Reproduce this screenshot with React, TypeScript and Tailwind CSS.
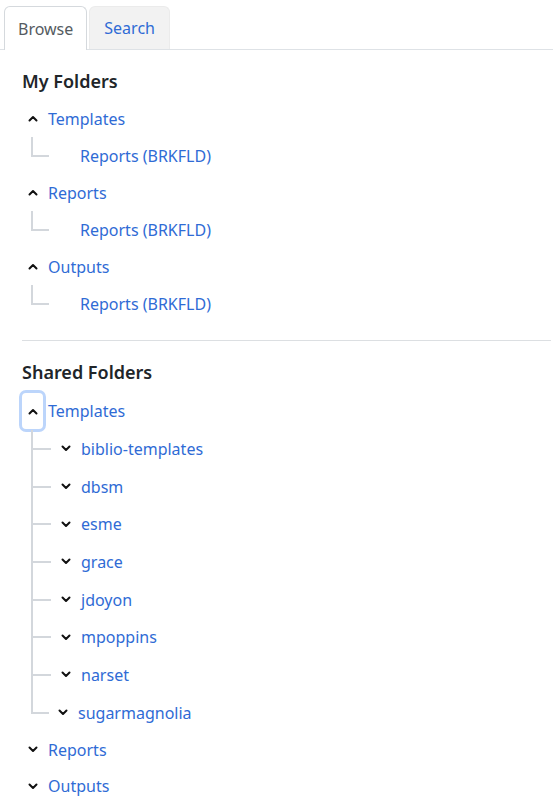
import React from 'react';

const Chevron: React.FC<{ up?: boolean }> = ({ up }) => (
  <svg width="10" height="7" viewBox="0 0 10 7" className="block">
    {up ? (
      <polyline points="1.5,5.5 5,2 8.5,5.5" fill="none" stroke="#111" strokeWidth="2" strokeLinecap="round" strokeLinejoin="round" />
    ) : (
      <polyline points="1.5,1.5 5,5 8.5,1.5" fill="none" stroke="#111" strokeWidth="2" strokeLinecap="round" strokeLinejoin="round" />
    )}
  </svg>
);

const Connector: React.FC<{ last?: boolean; width: string }> = ({ last, width }) => (
  <div className={`flex flex-col self-stretch shrink-0 ${width}`}>
    <div className="flex-1 border-l-2 border-b-2 border-[#d3d7dc]" />
    <div className={`flex-1 ${last ? '' : 'border-l-2 border-[#d3d7dc]'}`} />
  </div>
);

const FolderRow: React.FC<{ label: string; open?: boolean; focused?: boolean; h?: string }> = ({ label, open, focused, h = 'h-[37px]' }) => (
  <div className={`flex items-center ${h}`}>
    <button
      className={`w-[27px] h-[42px] -ml-[3px] shrink-0 flex items-center justify-center rounded-[7px] border-[3px] ${
        focused ? 'border-[#bcd5fb]' : 'border-transparent'
      }`}
    >
      <Chevron up={open} />
    </button>
    <a className="ml-[2px] text-[#2f6bd5]">{label}</a>
  </div>
);

export default function App() {
  const myFolders = ['Templates', 'Reports', 'Outputs'];
  const shared = ['biblio-templates', 'dbsm', 'esme', 'grace', 'jdoyon', 'mpoppins', 'narset', 'sugarmagnolia'];

  return (
    <div className="w-[553px] h-[805px] overflow-hidden bg-white text-[16px] text-[#212529]" style={{ fontFamily: '"Noto Sans", "Open Sans", sans-serif' }}>
      {/* tabs */}
      <div className="flex items-end gap-[2px] pl-[4px] pt-[6px] border-b border-[#dee2e6]">
        <div className="h-[44px] -mb-px px-[13px] flex items-center bg-white border border-b-0 border-[#d5d9dd] rounded-t-[6px] text-[#555b61]">
          Browse
        </div>
        <div className="h-[43px] px-[14px] flex items-center bg-[#f2f2f2] border border-b-0 border-[#ebebeb] rounded-t-[6px] text-[#2f6bd5]">
          Search
        </div>
      </div>

      <div className="pl-[22px] pr-[2px]">
        <h2 className="mt-[18px] mb-[5px] text-[18px] font-semibold leading-[27px]">My Folders</h2>
        {myFolders.map((f) => (
          <div key={f}>
            <FolderRow label={f} open />
            <div className="flex h-[37px] ml-[9px]">
              <Connector last width="w-[18px]" />
              <a className="flex items-center ml-[31px] text-[#2f6bd5]">Reports (BRKFLD)</a>
            </div>
          </div>
        ))}

        <div className="mt-[18px] border-t border-[#dcdfe2]" />

        <h2 className="mt-[18px] mb-[6px] text-[18px] font-semibold leading-[27px]">Shared Folders</h2>
        <FolderRow label="Templates" open focused h="h-[38px]" />
        <div className="ml-[9px]">
          {shared.map((s, i) => {
            const last = i === shared.length - 1;
            return (
              <div key={s} className="flex h-[37.7px]">
                <Connector last={last} width={last ? 'w-[18px]' : 'w-[20px]'} />
                <span className={`flex items-center ${last ? 'ml-[9px]' : 'ml-[10px]'}`}>
                  <Chevron />
                </span>
                <a className="flex items-center ml-[10px] text-[#2f6bd5]">{s}</a>
              </div>
            );
          })}
        </div>
        <FolderRow label="Reports" h="h-[36.5px]" />
        <FolderRow label="Outputs" h="h-[36.5px]" />
      </div>
    </div>
  );
}
